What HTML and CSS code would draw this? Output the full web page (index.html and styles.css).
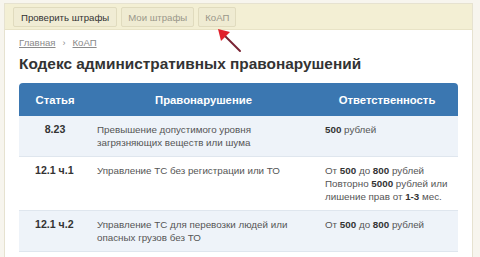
FILE: index.html
```html
<!DOCTYPE html>
<html lang="ru">
<head>
<meta charset="utf-8">
<link rel="stylesheet" href="styles.css">
</head>
<body>
<div class="panel">
  <div class="tabs">
    <span class="tab active">Проверить штрафы</span>
    <span class="tab">Мои штрафы</span>
    <span class="tab">КоАП</span>
  </div>
  <div class="content">
    <div class="crumbs"><a>Главная</a><span class="sep">›</span><a>КоАП</a></div>
    <h1 class="title">Кодекс административных правонарушений</h1>
    <table class="koap">
      <colgroup><col class="c1"><col class="c2"><col class="c3"></colgroup>
      <thead>
        <tr><th class="c1">Статья</th><th class="c2">Правонарушение</th><th class="c3">Ответственность</th></tr>
      </thead>
      <tbody>
        <tr class="alt">
          <td class="c1 num center">8.23</td>
          <td class="c2">Превышение допустимого уровня<br>загрязняющих веществ или шума</td>
          <td class="c3"><b>500</b> рублей</td>
        </tr>
        <tr>
          <td class="c1 num">12.1 ч.1</td>
          <td class="c2">Управление ТС без регистрации или ТО</td>
          <td class="c3">От <b>500</b> до <b>800</b> рублей<br>Повторно <b>5000</b> рублей или<br>лишение прав от <b>1-3</b> мес.</td>
        </tr>
        <tr class="alt">
          <td class="c1 num">12.1 ч.2</td>
          <td class="c2">Управление ТС для перевозки людей или<br>опасных грузов без ТО</td>
          <td class="c3">От <b>500</b> до <b>800</b> рублей</td>
        </tr>
      </tbody>
    </table>
  </div>
  <svg class="arrow" width="30" height="30" viewBox="0 0 30 30">
    <line x1="24" y1="24" x2="9" y2="9" stroke="#7a2434" stroke-width="2" stroke-linecap="round"/>
    <polygon points="2,2 14,5 5,14" fill="#e0202c"/>
  </svg>
</div>
</body>
</html>
```
FILE: styles.css
```css
html, body {
  margin: 0;
  padding: 0;
}
body {
  background: #f7f5ee;
  font-family: "Liberation Sans", Arial, sans-serif;
  color: #333;
  padding: 3px 7px 0 4px;
  height: 257px;
  box-sizing: border-box;
  overflow: hidden;
}
.panel {
  position: relative;
  background: #fff;
  border: 1px solid #e6e2d0;
  border-bottom: none;
  height: 254px;
  box-sizing: border-box;
}
.tabs {
  display: flex;
  gap: 4px;
  background: #f3efd4;
  border-bottom: 1px solid #e8e3c6;
  height: 26px;
  box-sizing: border-box;
  padding: 3px 8px 0 8px;
}
.tab {
  display: flex;
  align-items: center;
  height: 20px;
  box-sizing: border-box;
  padding: 0 6px;
  font-size: 9.6px;
  color: #9a978a;
  background: #efebd2;
  border: 1px solid #e0dbbe;
  border-radius: 2px;
}
.tab.active {
  color: #333;
  background: #f0ecd4;
  padding: 0 7px;
}
.content {
  padding: 0 14px 0 14px;
}
.crumbs {
  font-size: 9.6px;
  color: #8a8a8a;
  margin-top: 6px;
  height: 14px;
  line-height: 14px;
}
.crumbs a {
  text-decoration: underline;
  color: #8a8a8a;
}
.crumbs .sep {
  margin: 0 7px;
  font-size: 9px;
}
.title {
  font-size: 15.4px;
  font-weight: bold;
  margin: 4px 0 0 0;
  line-height: 20px;
  color: #333;
}
.koap {
  margin-top: 9px;
  width: 439px;
  table-layout: fixed;
  border-collapse: separate;
  border-spacing: 0;
  font-size: 9.8px;
}
col.c1 { width: 72px; }
col.c2 { width: 225px; }
col.c3 { width: 142px; }
.koap th {
  background: #3b77b1;
  color: #fff;
  font-size: 11.3px;
  font-weight: bold;
  height: 33px;
  padding: 0;
  text-align: center;
  vertical-align: middle;
}
.koap th.c1 { border-top-left-radius: 4px; }
.koap th.c3 { border-top-right-radius: 4px; }
.koap td {
  vertical-align: top;
  line-height: 13px;
  padding: 7px 0 7px 6px;
  color: #555;
  border-bottom: 1px solid #dfe6ee;
  text-align: left;
}
.koap td.c3 { padding-left: 9px; }
.koap td.num {
  font-size: 10.6px;
  font-weight: bold;
  color: #333;
  padding-left: 16px;
}
.koap td.center {
  text-align: center;
  padding-left: 0;
}
.koap tr.alt td {
  background: #eef3f9;
}
.koap td b {
  color: #333;
}
.arrow {
  position: absolute;
  left: 211px;
  top: 23px;
}
```
